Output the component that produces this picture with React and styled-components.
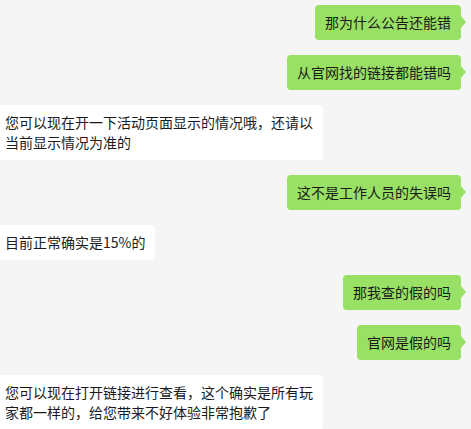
import React from "react";
import styled, { createGlobalStyle } from "styled-components";

const Global = createGlobalStyle`
  html, body {
    margin: 0;
    padding: 0;
    background: #f5f5f5;
    overflow: hidden;
  }
  body {
    font-family: "Noto Sans CJK SC", "Microsoft YaHei", sans-serif;
  }
`;

const Chat = styled.div`
  display: flex;
  flex-direction: column;
  gap: 15px;
  padding: 5px 0 0;
  width: 471px;
  height: 429px;
  box-sizing: border-box;
  overflow: hidden;
  background: #f5f5f5;
`;

const Row = styled.div`
  display: flex;
  justify-content: ${(p) => (p.$mine ? "flex-end" : "flex-start")};
  padding-right: ${(p) => (p.$mine ? "10px" : "0")};
  margin-left: ${(p) => (p.$mine ? "0" : "-5px")};
`;

const Bubble = styled.div`
  position: relative;
  box-sizing: border-box;
  padding: 7px 10px 8px;
  max-width: 328px;
  border-radius: 4px;
  font-size: 14px;
  line-height: 20px;
  color: #1a1a1a;
  background: ${(p) => (p.$mine ? "#98e165" : "#ffffff")};
  word-break: break-all;

  &::after {
    content: "";
    position: absolute;
    top: 11px;
    ${(p) => (p.$mine ? "right: -5px;" : "left: -5px;")}
    border-top: 6px solid transparent;
    border-bottom: 6px solid transparent;
    ${(p) =>
      p.$mine
        ? "border-left: 5px solid #98e165;"
        : "border-right: 5px solid #ffffff;"}
  }
`;

const messages = [
  { mine: true, text: "那为什么公告还能错" },
  { mine: true, text: "从官网找的链接都能错吗" },
  { mine: false, text: "您可以现在开一下活动页面显示的情况哦，还请以当前显示情况为准的" },
  { mine: true, text: "这不是工作人员的失误吗" },
  { mine: false, text: "目前正常确实是15%的" },
  { mine: true, text: "那我查的假的吗" },
  { mine: true, text: "官网是假的吗" },
  { mine: false, text: "您可以现在打开链接进行查看，这个确实是所有玩家都一样的，给您带来不好体验非常抱歉了" },
];

export default function App() {
  return (
    <>
      <Global />
      <Chat>
        {messages.map((m, i) => (
          <Row key={i} $mine={m.mine}>
            <Bubble $mine={m.mine}>{m.text}</Bubble>
          </Row>
        ))}
      </Chat>
    </>
  );
}
